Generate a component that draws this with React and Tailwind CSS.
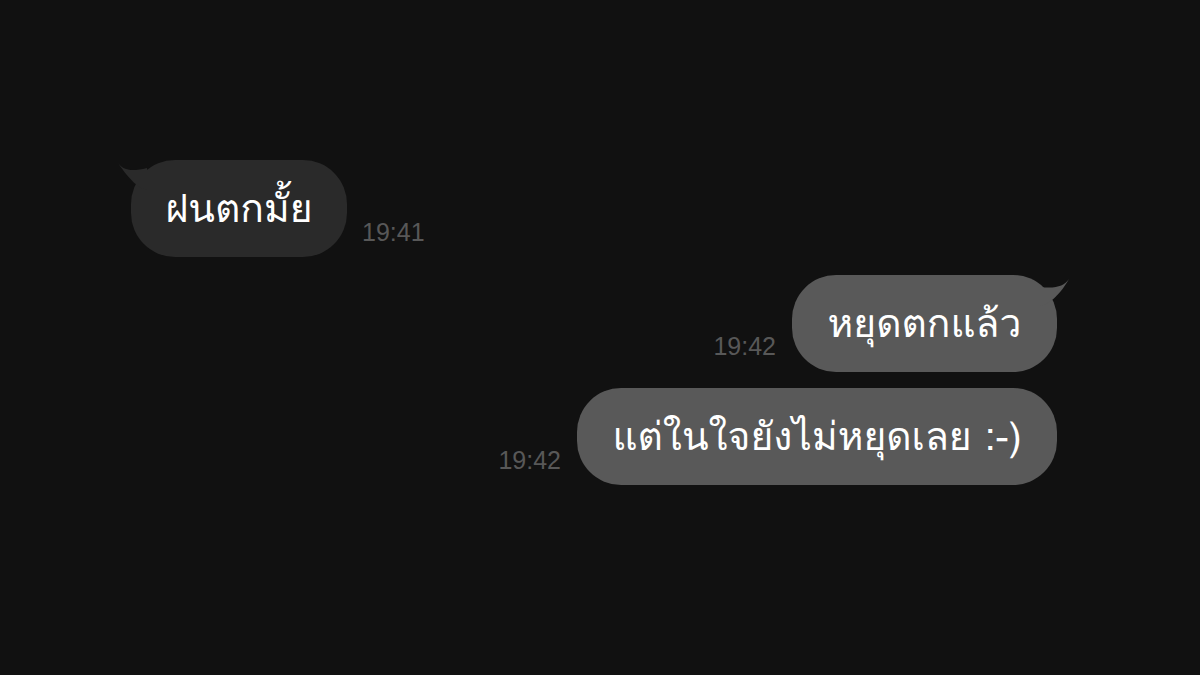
const thai = { fontFamily: 'Loma, Garuda, "Tlwg Typo", "Noto Sans Thai", "Noto Sans", sans-serif' }

function TailLeft({ color }) {
  return (
    <svg className="absolute -left-[14px] top-[2px]" width="32" height="30" viewBox="0 0 32 30">
      <path d="M1 1 C6 8 14 10 30 6 L30 28 C22 26 14 20 1 1 Z" fill={color} />
    </svg>
  )
}

function TailRight({ color }) {
  return (
    <svg className="absolute -right-[13px] top-[3px]" width="32" height="30" viewBox="0 0 32 30">
      <path d="M31 1 C26 8 18 11 2 9 L2 28 C10 26 20 20 31 1 Z" fill={color} />
    </svg>
  )
}

function Bubble({ text, color, tail, className = '' }) {
  return (
    <div
      className={`relative flex h-[97px] items-center justify-center rounded-[44px] text-[39px] leading-none text-white ${className}`}
      style={{ backgroundColor: color }}
    >
      {tail === 'left' && <TailLeft color={color} />}
      {tail === 'right' && <TailRight color={color} />}
      <span className="relative whitespace-nowrap" style={thai}>{text}</span>
    </div>
  )
}

function Time({ children, className = '' }) {
  return (
    <span
      className={`text-[25px] leading-none text-[#585858] ${className}`}
      style={{ fontFamily: '"Liberation Sans", Arial, sans-serif' }}
    >
      {children}
    </span>
  )
}

export default function App() {
  return (
    <div className="flex h-[675px] w-[1200px] flex-col overflow-hidden bg-[#111111] pt-[160px]">
      <div className="flex items-end pl-[131px]">
        <Bubble text="ฝนตกมั้ย" color="#2a2a2a" tail="left" className="w-[216px]" />
        <Time className="mb-[12px] ml-[15px]">19:41</Time>
      </div>

      <div className="mt-[18px] flex items-end justify-end pr-[143px]">
        <Time className="mb-[13px] mr-[16px]">19:42</Time>
        <Bubble text="หยุดตกแล้ว" color="#595959" tail="right" className="w-[265px]" />
      </div>

      <div className="mt-[16px] flex items-end justify-end pr-[143px]">
        <Time className="mb-[12px] mr-[16px]">19:42</Time>
        <Bubble text="แต่ในใจยังไม่หยุดเลย :-)" color="#595959" className="w-[480px]" />
      </div>
    </div>
  )
}
